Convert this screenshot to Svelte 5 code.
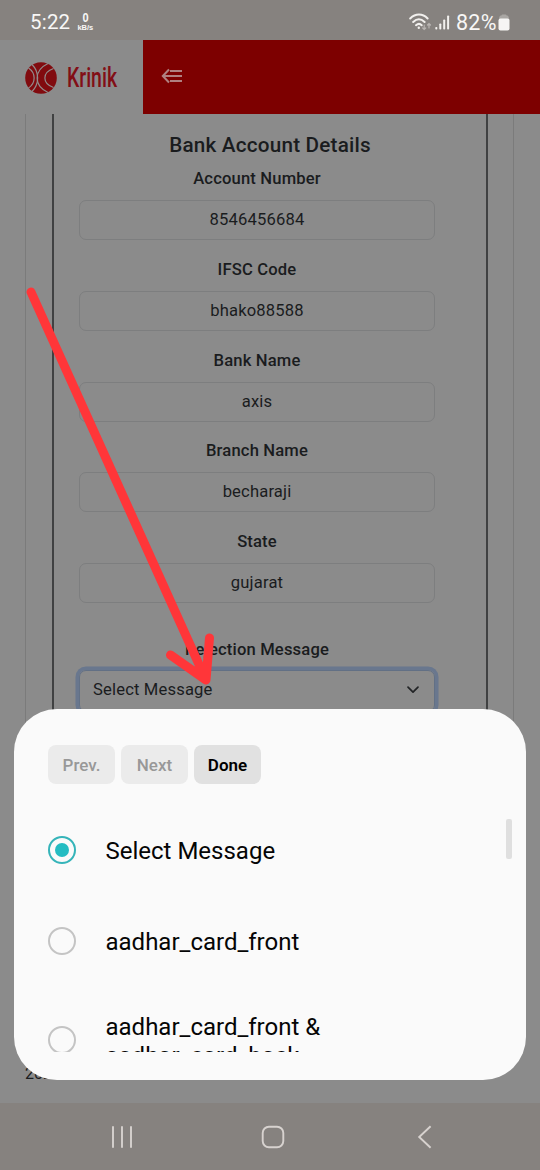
<script>
  const fields = [
    { label: 'Account Number', value: '8546456684' },
    { label: 'IFSC Code', value: 'bhako88588' },
    { label: 'Bank Name', value: 'axis' },
    { label: 'Branch Name', value: 'becharaji' },
    { label: 'State', value: 'gujarat' }
  ];
  const options = ['Select Message', 'aadhar_card_front', 'aadhar_card_front & aadhar_card_back'];
  let selected = $state(0);
</script>

<div class="screen">
  <div class="status">
    <span class="time">5:22</span>
    <span class="speed"><b>0</b><small>kB/s</small></span>
    <svg class="wifi" width="23" height="20" viewBox="0 0 23 20" fill="none" stroke="#f2f0ee" stroke-width="2" stroke-linecap="round">
      <path d="M1.200 6.500C6.500 1.300 13.500 1.300 18.600 6.500M4.200 10C7.800 6.500 12 6.500 15.600 10M7 13.200C9 11.500 11 11.500 12.700 13.200" />
      <circle cx="9.800" cy="15.700" r="1.200" fill="#f2f0ee" stroke="none" />
      <path d="M15.200 13v4.500m-1.500-1.500 1.500 1.500 1.500-1.500M20 16V11.500m-1.500 1.500L20 11.500l1.500 1.500" stroke="#b9b5b2" stroke-width="1.200" />
    </svg>
    <svg class="signal" width="15" height="15" viewBox="0 0 15 15" fill="#f2f0ee">
      <rect x="0.300" y="12" width="2" height="2.500" rx=".8" />
      <rect x="4.300" y="8.500" width="2" height="6" rx=".8" />
      <rect x="8.200" y="4.500" width="2" height="10" rx=".8" />
      <rect x="12.100" y="0.500" width="2" height="14" rx=".8" />
    </svg>
    <span class="percent">82%</span>
    <svg class="battery" width="12" height="17" viewBox="0 0 12 17">
      <path d="M3.500 1.500Q3.500.5 4.500.5h3Q8.500.5 8.500 1.500H9.500Q11 2 11 5H1Q1 2 2.500 1.500z" fill="#a9a6a3" />
      <rect x=".5" y="4.500" width="11" height="12" rx="2" fill="#f6f5f4" />
    </svg>
  </div>

  <header>
    <div class="brand">
      <svg width="34" height="34" viewBox="0 0 34 34">
        <circle cx="17" cy="17" r="15.800" fill="#810b0f" />
        <g fill="none" stroke="#918c8c" stroke-width="1.200">
          <path d="M4.500 7C12 12 12 22 4.500 27" />
          <path d="M8 3.500C15.500 11 15.500 23 8 30.500" />
          <path d="M17 1.500C9.500 9 9.500 25 17 32.500" transform="translate(-1 0)" stroke="none" />
          <path d="M24 2.500C9.500 9.500 9.500 24.500 24 31.500" />
          <path d="M29.500 7.500C18 11.500 18 22.500 29.500 26.500" />
        </g>
      </svg>
      <span class="name">Krinik</span>
    </div>
    <div class="bar">
      <svg width="22" height="16" viewBox="0 0 22 16" fill="none" stroke="#b08080" stroke-width="2">
        <path d="M8 1.500 1.800 8l6.200 6.500M2 8h19M9 3.100h12M9 12.900h12" />
      </svg>
    </div>
  </header>

  <main>
    <div class="outer">
      <div class="card">
        <h2>Bank Account Details</h2>
        <div class="form">
          {#each fields as f}
            <div class="field">
              <div class="label">{f.label}</div>
              <div class="input">{f.value}</div>
            </div>
          {/each}
          <div class="field rejection">
            <div class="label">Rejection Message</div>
            <div class="input select">
              <span>Select Message</span>
              <svg width="14" height="10" viewBox="0 0 14 10" fill="none" stroke="#222426" stroke-width="1.700" stroke-linecap="round" stroke-linejoin="round"><path d="M2 2.200 7 7.200 12 2.200" /></svg>
            </div>
          </div>
        </div>
      </div>
    </div>
    <footer>2024</footer>
  </main>

  <nav>
    <svg width="22" height="24" viewBox="0 0 22 24" stroke="#d7d2cf" stroke-width="1.900"><path d="M2 1.300v21.400M11 1.300v21.400M20 1.300v21.400" /></svg>
    <svg width="24" height="24" viewBox="0 0 24 24" fill="none" stroke="#d7d2cf" stroke-width="1.900"><rect x="1.700" y="1.700" width="20.600" height="20.600" rx="6.300" /></svg>
    <svg width="16" height="24" viewBox="0 0 16 24" fill="none" stroke="#d7d2cf" stroke-width="1.900"><path d="M13.600 1.200 2.200 12l11.400 10.800" /></svg>
  </nav>

  <svg class="pointer" width="540" height="708" viewBox="0 0 540 708" fill="none" stroke="#ff3639" stroke-width="9" stroke-linecap="round" stroke-linejoin="round">
    <path d="M31 292 206 680M170.500 655 206 680 209.500 638" />
  </svg>

  <section class="sheet">
    <div class="actions">
      <button disabled>Prev.</button>
      <button disabled>Next</button>
      <button class="done">Done</button>
    </div>
    <div class="options">
      {#each options as o, i}
        <div class="option" role="radio" tabindex="-1" aria-checked={selected === i} onclick={() => (selected = i)} onkeydown={() => {}}>
          <span class="radio" class:on={selected === i}></span>
          <span class="text">{o}</span>
        </div>
      {/each}
      <i class="thumb"></i>
    </div>
  </section>
</div>

<style>
  :global(body) { margin: 0; }
  * { box-sizing: border-box; }
  .screen { position: relative; width: 540px; height: 1170px; display: flex; flex-direction: column; overflow: hidden; background: #8b8b8b; font-family: Roboto, sans-serif; color: #1a1c1e; }
  .status { height: 40px; flex: none; display: flex; align-items: center; background: #86827f; color: #f8f7f6; padding: 4px 30px 0 30px; }
  .time { font-size: 20.500px; letter-spacing: .2px; }
  .speed { width: 18px; margin-left: 6px; display: flex; flex-direction: column; align-items: center; line-height: 1; }
  .speed b { font: 700 13px/12px "Liberation Sans", sans-serif; transform: scaleX(.85); }
  .speed small { font: 700 7.500px/8px "Liberation Sans", sans-serif; }
  .wifi { margin-left: auto; }
  .signal { margin-left: 3px; }
  .percent { font-size: 21.500px; letter-spacing: .4px; margin: 0 1px 0 6px; }
  header { height: 74px; flex: none; display: flex; }
  .brand { width: 142.500px; display: flex; align-items: center; padding: 1px 0 0 24px; gap: 9px; }
  .name { color: #820f16; font-size: 27px; font-weight: 500; transform: scaleX(.72); transform-origin: left; width: 50px; }
  .bar { flex: 1; background: #7d0000; padding: 28px 0 0 18px; }
  main { flex: 1; min-height: 0; }
  .outer { height: 940px; margin: 0 26px 0 25px; border: solid #7b7b7b; border-width: 0 1.500px; padding: 0 25px 0 26px; }
  .card { height: 100%; border: solid #404142; border-width: 0 2px; padding: 16px 0 0; }
  h2 { margin: 0 0 5px; text-align: center; font-size: 20.700px; line-height: 30px; font-weight: 500; letter-spacing: .2px; }
  .form { padding: 0 51px 0 25px; }
  .field { height: 90.700px; }
  .label { text-align: center; font-size: 16.600px; line-height: 28px; font-weight: 500; letter-spacing: .16px; margin-bottom: 7px; padding-top: .3px; }
  .input { height: 40px; border: 1px solid #7d7e7f; border-radius: 7px; text-align: center; font-size: 16.600px; line-height: 38px; letter-spacing: .16px; }
  .rejection { padding-top: 17px; }
  .select { height: 42px; border-color: #627085; box-shadow: 0 0 0 3.500px #69778e; display: flex; align-items: center; justify-content: space-between; padding: 0 14px 2px 13px; margin-top: -1px; }
  footer { padding: 10px 25px; font-size: 16px; line-height: 20px; }
  nav { height: 67px; flex: none; background: #86827f; display: flex; align-items: center; padding: 1px 0 0 111px; }
  nav svg + svg { margin-left: 128px; }
  nav svg:last-child { margin-left: 132px; }
  .pointer { position: absolute; left: 0; top: 0; }
  .sheet { position: absolute; left: 14px; top: 708.500px; width: 512px; height: 371.500px; border-radius: 43px; background: #fafafa; padding: 36.500px 14px 28px 34px; display: flex; flex-direction: column; color: #050505; }
  .actions { display: flex; gap: 6px; height: 39px; flex: none; }
  button { width: 67px; border: 0; border-radius: 8px; background: #ebebeb; color: #989898; font: 500 17px Roboto, sans-serif; padding: 0; }
  .done { background: #e1e1e1; color: #000; font-weight: 600; }
  .options { position: relative; height: 247.500px; margin-top: 20px; overflow: hidden; }
  .option { display: flex; align-items: center; height: 91px; gap: 30px; }
  .option:nth-child(3) { height: 107px; }
  .radio { width: 28px; height: 28px; border: 2px solid #c4c4c4; border-radius: 50%; flex: none; display: flex; align-items: center; justify-content: center; }
  .on { border: 2.500px solid #35b4b9; }
  .on::after { content: ''; width: 14px; height: 14px; border-radius: 50%; background: #24bcc2; }
  .text { width: 250px; font-size: 24px; line-height: 28px; padding-top: 2px; margin-left: -.5px; }
  .option:nth-child(3) .text { padding-top: 4px; line-height: 28.500px; }
  .thumb { position: absolute; right: 0; top: 15px; width: 6px; height: 40px; border-radius: 2px; background: #dfdfdf; }
</style>
